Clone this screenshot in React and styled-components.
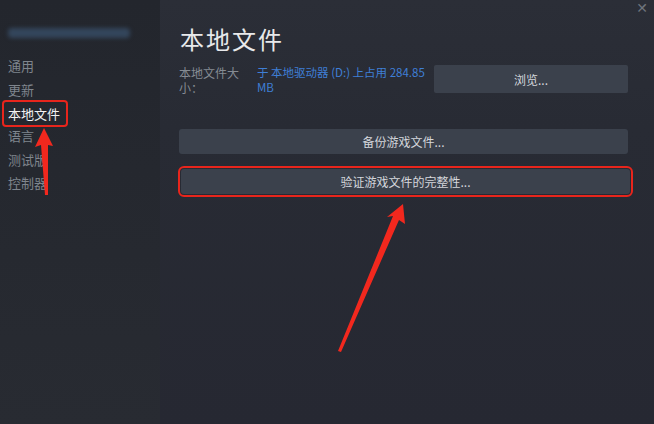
import styled, { createGlobalStyle } from 'styled-components';

const GlobalStyle = createGlobalStyle`
  html, body {
    margin: 0;
    padding: 0;
    background: #262932;
  }
  body {
    font-family: "Noto Sans CJK SC", "Noto Sans", "Liberation Sans", sans-serif;
  }
`;

const Window = styled.div`
  position: relative;
  width: 654px;
  height: 424px;
  display: flex;
  overflow: hidden;
  background: #262932;
`;

const Sidebar = styled.nav`
  width: 160px;
  flex-shrink: 0;
  display: flex;
  flex-direction: column;
  padding: 28px 0 0 0;
  box-sizing: border-box;
  background: linear-gradient(180deg, #23262d 0%, #262930 60%, #282b32 100%);
`;

const BlurTitle = styled.div`
  margin-left: 8px;
  width: 122px;
  height: 10px;
  border-radius: 4px;
  background: #34465c;
  filter: blur(2px);
  margin-bottom: 16px;
`;

const NavItem = styled.div`
  align-self: flex-start;
  margin-left: ${(p) => (p.$boxed ? '2px' : '8px')};
  padding: ${(p) => (p.$boxed ? '1px 6px 1px 4px' : '0')};
  height: ${(p) => (p.$boxed ? '21px' : '23.5px')};
  line-height: ${(p) => (p.$boxed ? '21px' : '23.5px')};
  font-size: 13px;
  color: ${(p) => (p.$active ? '#f2f2f2' : '#7f858d')};
  border: ${(p) => (p.$boxed ? '2.5px solid #e8251c' : 'none')};
  border-radius: 4px;
  box-sizing: content-box;
  margin-top: ${(p) => (p.$boxed ? '-1px' : '0')};
  margin-bottom: ${(p) => (p.$boxed ? '-3px' : '0')};
`;

const Main = styled.main`
  flex: 1;
  display: flex;
  flex-direction: column;
  padding: 22px 23px 0 19px;
  background: linear-gradient(180deg, #2b2e37 0%, #282b34 30%, #262832 100%);
`;

const Title = styled.h1`
  margin: 0 0 9px 1px;
  font-size: 24px;
  font-weight: 400;
  letter-spacing: 2px;
  color: #e8e9eb;
  line-height: 34px;
`;

const InfoRow = styled.div`
  display: grid;
  grid-template-columns: 78px 177px 1fr;
  align-items: start;
`;

const Label = styled.div`
  font-size: 12px;
  line-height: 15px;
  color: #858b93;
  width: 64px;
`;

const SizeText = styled.div`
  font-size: 11.5px;
  line-height: 15px;
  color: #3f7fd6;
  width: 176px;
`;

const Button = styled.div`
  display: flex;
  align-items: center;
  justify-content: center;
  height: ${(p) => p.$h || 25}px;
  background: #3b414c;
  color: #d4d7dc;
  font-size: 12px;
  border-radius: 2px;
`;

const BrowseButton = styled(Button)`
  width: 194px;
`;

const WideButton = styled(Button)`
  margin-top: ${(p) => p.$top}px;
  width: 449px;
  outline: ${(p) => (p.$flagged ? '2.5px solid #e8251c' : 'none')};
  outline-offset: 1px;
  border-radius: 3px;
  margin-left: ${(p) => (p.$flagged ? '2px' : '0')};
`;

const Close = styled.div`
  position: absolute;
  top: 0;
  right: 6px;
  font-size: 14px;
  color: #6e747c;
  font-family: "DejaVu Sans", sans-serif;
`;

const ArrowLayer = styled.svg`
  position: absolute;
  left: 0;
  top: 0;
  pointer-events: none;
`;

const navItems = ['通用', '更新', '本地文件', '语言', '测试版', '控制器'];

export default function App() {
  return (
    <Window>
      <GlobalStyle />
      <Sidebar>
        <BlurTitle />
        {navItems.map((item) => (
          <NavItem key={item} $active={item === '本地文件'} $boxed={item === '本地文件'}>
            {item}
          </NavItem>
        ))}
      </Sidebar>
      <Main>
        <Title>本地文件</Title>
        <InfoRow>
          <Label>本地文件大小：</Label>
          <SizeText>于 本地驱动器 (D:) 上占用 284.85 MB</SizeText>
          <BrowseButton $h={28}>浏览...</BrowseButton>
        </InfoRow>
        <WideButton $top={34}>备份游戏文件...</WideButton>
        <WideButton $top={15} $flagged>验证游戏文件的完整性...</WideButton>
      </Main>
      <Close>✕</Close>
      <ArrowLayer width="654" height="424" viewBox="0 0 654 424">
        <polygon points="44,128 53,146 48,145 48,195 45,195 41,145 35,147" fill="#f2281e" />
        <polygon points="403,204 405,224 399,220 341,352 338,351 393,216 387,217" fill="#f2281e" />
      </ArrowLayer>
    </Window>
  );
}
